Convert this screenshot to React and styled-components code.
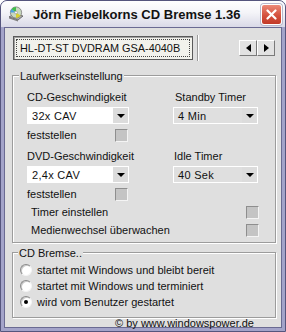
import React from 'react';
import styled, {createGlobalStyle} from 'styled-components';

const Global = createGlobalStyle`
  html, body { margin: 0; padding: 0; background: #ffffff; }
  body { font-family: "Liberation Sans", Arial, sans-serif; color: #111; }
`;

const Window = styled.div`
  width: 286px;
  height: 332px;
  box-sizing: border-box;
  background: #a3a3c9;
  border: 1px solid #55557d;
  border-radius: 7px 7px 0 0;
  display: flex;
  flex-direction: column;
  overflow: hidden;
`;

const TitleBar = styled.div`
  height: 26px;
  flex: none;
  display: flex;
  align-items: center;
  padding: 0 3px 0 7px;
  background: linear-gradient(#ffffff, #f4f4f8 45%, #d9d9e7);
`;

const Title = styled.div`
  flex: 1;
  margin-left: 9px;
  font-size: 13px;
  font-weight: bold;
  color: #121212;
  white-space: nowrap;
`;

const CloseButton = styled.div`
  width: 21px;
  height: 21px;
  box-sizing: border-box;
  border: 1px solid #ffffff;
  border-radius: 3px;
  background: linear-gradient(#ec8a78, #d4513e 55%, #c23a28);
  display: flex;
  align-items: center;
  justify-content: center;
  box-shadow: 0 0 0 1px #b8b8cc;
`;

const Content = styled.div`
  flex: 1;
  margin: 0 3px 3px 3px;
  border: 1px solid #6a6a92;
  background: #dfdfdf;
  padding: 7px 5px 0 7px;
  display: flex;
  flex-direction: column;
`;

const TopRow = styled.div`
  height: 26px;
  display: flex;
  align-items: center;
`;

const DriveBox = styled.div`
  width: 180px;
  height: 24px;
  margin-left: 1px;
  box-sizing: border-box;
  border: 1px solid #5a5a5a;
  box-shadow: inset 1px 1px 0 #a0a0a0;
  background: #f2f2ec;
  padding: 2px;
`;

const DriveFocus = styled.div`
  height: 100%;
  box-sizing: border-box;
  border: 1px dotted #444;
  display: flex;
  align-items: center;
  padding-left: 3px;
  font-size: 10.9px;
  white-space: nowrap;
  overflow: hidden;
`;

const Separator = styled.div`
  width: 1px;
  height: 26px;
  margin-left: 4px;
  background: #9a9a9a;
  border-right: 1px solid #ffffff;
`;

const ArrowGroup = styled.div`
  margin-left: auto;
  margin-right: 1px;
  display: flex;
`;

const ArrowButton = styled.div`
  width: 18px;
  height: 16px;
  box-sizing: border-box;
  background: #e2e2e2;
  border-top: 1px solid #ffffff;
  border-left: 1px solid #ffffff;
  border-right: 1px solid #7a7a7a;
  border-bottom: 1px solid #7a7a7a;
  display: flex;
  align-items: center;
  justify-content: center;
`;

const Triangle = styled.div`
  width: 0;
  height: 0;
  border-top: 4px solid transparent;
  border-bottom: 4px solid transparent;
  ${p => p.$dir === 'left'
    ? 'border-right: 5px solid #000;'
    : 'border-left: 5px solid #000;'}
`;

const Group = styled.div`
  position: relative;
  margin-top: ${p => p.$top}px;
  border: 1px solid #9c9c9c;
  box-shadow: 1px 1px 0 #ffffff, inset 1px 1px 0 #ffffff;
  padding: ${p => p.$pad};
`;

const Legend = styled.span`
  position: absolute;
  top: -6px;
  left: ${p => p.$left}px;
  line-height: 13px;
  font-size: 11px;
  background: #dfdfdf;
  padding: 0 1px;
`;

const Columns = styled.div`
  display: grid;
  grid-template-columns: 146px 1fr;
  grid-auto-rows: 52px;
  row-gap: 7px;
`;

const Field = styled.div`
  display: flex;
  flex-direction: column;
  align-items: flex-start;
`;

const Label = styled.div`
  height: 14px;
  line-height: 14px;
  font-size: 11px;
  margin-left: ${p => p.$indent || 0}px;
  white-space: nowrap;
`;

const Select = styled.div`
  margin-top: 3px;
  width: ${p => p.$width}px;
  height: 17px;
  box-sizing: border-box;
  border: 1px solid #ffffff;
  background: ${p => p.$flat ? '#dfdfdf' : '#ffffff'};
  display: flex;
  align-items: center;
  font-size: 11px;
`;

const SelectText = styled.span`
  flex: 1;
  padding-left: 4px;
  letter-spacing: 0.3px;
`;

const DropButton = styled.div`
  width: 15px;
  height: 15px;
  background: #dcdcdc;
  display: flex;
  align-items: center;
  justify-content: center;
`;

const DownTriangle = styled.div`
  width: 0;
  height: 0;
  border-left: 4px solid transparent;
  border-right: 4px solid transparent;
  border-top: 4px solid #000;
  margin-top: 1px;
`;

const LockRow = styled.div`
  margin-top: 4px;
  width: 101px;
  height: 14px;
  display: flex;
  align-items: center;
  justify-content: space-between;
  font-size: 11px;
`;

const Check = styled.div`
  width: 13px;
  height: 13px;
  box-sizing: border-box;
  background: #c4c4c4;
  border-top: 1px solid #8e8e8e;
  border-left: 1px solid #8e8e8e;
  border-right: 1px solid #f4f4f4;
  border-bottom: 1px solid #f4f4f4;
`;

const OptionRow = styled.div`
  margin-top: 4px;
  height: 14px;
  display: flex;
  align-items: center;
  justify-content: space-between;
  padding: 0 16px 0 4px;
  font-size: 11px;
`;

const RadioRow = styled.label`
  height: 16px;
  display: flex;
  align-items: center;
  gap: 5px;
  font-size: 11px;
`;

const Radio = styled.span`
  width: 12px;
  height: 12px;
  box-sizing: border-box;
  border-radius: 50%;
  background: #ffffff;
  border: 1px solid;
  border-color: #8a8a8a #f4f4f4 #f4f4f4 #8a8a8a;
  box-shadow: inset 1px 1px 0 #c8c8c8;
  display: flex;
  align-items: center;
  justify-content: center;
  &::after {
    content: '';
    width: 4px;
    height: 4px;
    border-radius: 50%;
    background: ${p => p.$checked ? '#000' : 'transparent'};
  }
`;

const Footer = styled.div`
  height: 9px;
  line-height: 10px;
  font-size: 11px;
  text-align: right;
  padding-right: 22px;
  white-space: nowrap;
`;

const DriveIcon = () => (
  <svg width="16" height="16" viewBox="0 0 16 16">
    <path d="M1 11 L6 8 L15 10 L10 14 Z" fill="#b0b0b0" stroke="#555" strokeWidth="0.8" />
    <path d="M1 11 L10 14 L10 15.5 L1 12.5 Z" fill="#808080" />
    <circle cx="8" cy="6.5" r="5.6" fill="#c9d9c0" stroke="#6a6a6a" strokeWidth="0.7" />
    <path d="M8 6.5 L3.5 3.2 A5.6 5.6 0 0 1 8 0.9 Z" fill="#3fbf4a" />
    <path d="M8 6.5 L12.6 9.6 A5.6 5.6 0 0 1 8 12.1 Z" fill="#d8d030" />
    <path d="M8 6.5 L2.4 6.5 A5.6 5.6 0 0 1 3.5 3.2 Z" fill="#4aa0e0" />
    <circle cx="8" cy="6.5" r="1.4" fill="#ffffff" stroke="#777" strokeWidth="0.5" />
  </svg>
);

const CloseIcon = () => (
  <svg width="11" height="11" viewBox="0 0 11 11">
    <path d="M1.5 1.5 L9.5 9.5 M9.5 1.5 L1.5 9.5" stroke="#fff" strokeWidth="2.2" strokeLinecap="round" />
  </svg>
);

const Dropdown = ({value, width, flat}) => (
  <Select $width={width} $flat={flat}>
    <SelectText>{value}</SelectText>
    <DropButton><DownTriangle /></DropButton>
  </Select>
);

const App = () => (
  <>
    <Global />
    <Window>
      <TitleBar>
        <DriveIcon />
        <Title>Jörn Fiebelkorns CD Bremse 1.36</Title>
        <CloseButton><CloseIcon /></CloseButton>
      </TitleBar>
      <Content>
        <TopRow>
          <DriveBox>
            <DriveFocus>HL-DT-ST DVDRAM GSA-4040B</DriveFocus>
          </DriveBox>
          <Separator />
          <ArrowGroup>
            <ArrowButton><Triangle $dir="left" /></ArrowButton>
            <ArrowButton><Triangle $dir="right" /></ArrowButton>
          </ArrowGroup>
        </TopRow>

        <Group $top={14} $pad="14px 0 5px 14px">
          <Legend $left={6}>Laufwerkseinstellung</Legend>
          <Columns>
            <Field>
              <Label>CD-Geschwindigkeit</Label>
              <Dropdown value="32x CAV" width={102} />
              <LockRow>feststellen<Check /></LockRow>
            </Field>
            <Field>
              <Label $indent={2}>Standby Timer</Label>
              <Dropdown value="4 Min" width={85} flat />
            </Field>
            <Field>
              <Label>DVD-Geschwindigkeit</Label>
              <Dropdown value="2,4x CAV" width={102} />
              <LockRow>feststellen<Check /></LockRow>
            </Field>
            <Field>
              <Label $indent={1}>Idle Timer</Label>
              <Dropdown value="40 Sek" width={85} flat />
            </Field>
          </Columns>
          <OptionRow>Timer einstellen<Check /></OptionRow>
          <OptionRow>Medienwechsel überwachen<Check /></OptionRow>
        </Group>

        <Group $top={9} $pad="9px 0 7px 7px">
          <Legend $left={5}>CD Bremse..</Legend>
          <RadioRow><Radio />startet mit Windows und bleibt bereit</RadioRow>
          <RadioRow><Radio />startet mit Windows und terminiert</RadioRow>
          <RadioRow><Radio $checked />wird vom Benutzer gestartet</RadioRow>
        </Group>

        <Footer>© by www.windowspower.de</Footer>
      </Content>
    </Window>
  </>
);

export default App;
